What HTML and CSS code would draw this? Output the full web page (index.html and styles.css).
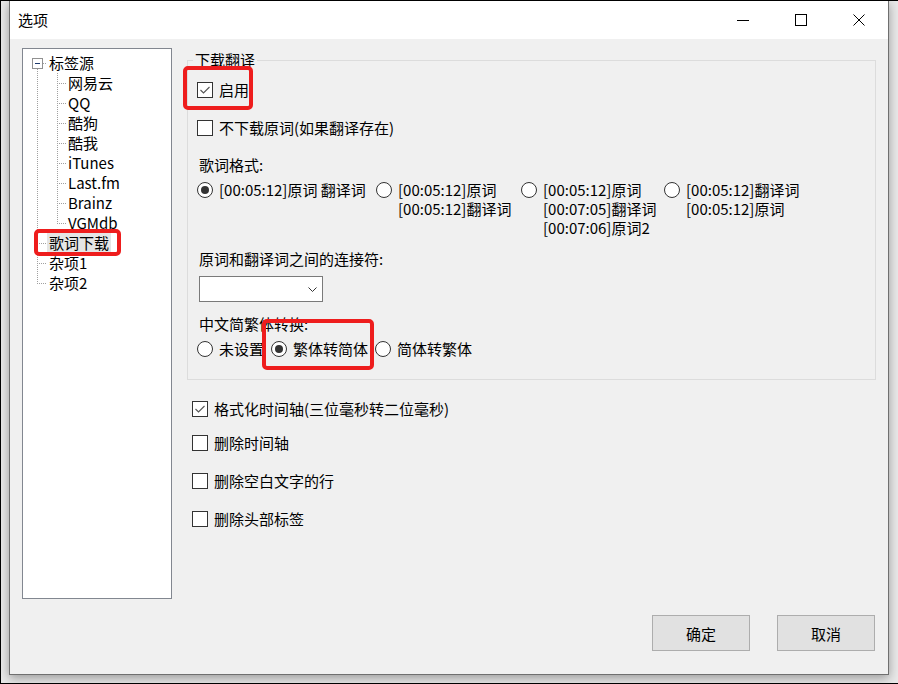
FILE: index.html
```html
<!DOCTYPE html>
<html lang="zh-CN">
<head>
<meta charset="utf-8">
<title>选项</title>
<link rel="stylesheet" href="styles.css">
</head>
<body>
<div class="screen">
  <div class="window">
    <div class="titlebar">
      <span class="title">选项</span>
      <div class="caption">
        <span class="cap-btn"><svg width="12" height="12" viewBox="0 0 12 12"><line x1="0" y1="6.5" x2="12" y2="6.5" stroke="#000" stroke-width="1"/></svg></span>
        <span class="cap-btn"><svg width="12" height="12" viewBox="0 0 12 12"><rect x="0.5" y="0.5" width="11" height="11" fill="none" stroke="#000" stroke-width="1"/></svg></span>
        <span class="cap-btn"><svg width="12" height="12" viewBox="0 0 12 12"><path d="M0.5 0.5 L11.5 11.5 M11.5 0.5 L0.5 11.5" stroke="#000" stroke-width="1" fill="none"/></svg></span>
      </div>
    </div>
    <div class="client">
      <div class="main">
        <div class="tree">
          <div class="node"><span class="gut g0 root"><span class="exp"></span></span><span class="label">标签源</span></div>
          <div class="node"><span class="gut g1 ch"></span><span class="label">网易云</span></div>
          <div class="node"><span class="gut g1 ch"></span><span class="label">QQ</span></div>
          <div class="node"><span class="gut g1 ch"></span><span class="label">酷狗</span></div>
          <div class="node"><span class="gut g1 ch"></span><span class="label">酷我</span></div>
          <div class="node"><span class="gut g1 ch"></span><span class="label">iTunes</span></div>
          <div class="node"><span class="gut g1 ch"></span><span class="label">Last.fm</span></div>
          <div class="node"><span class="gut g1 ch"></span><span class="label">Brainz</span></div>
          <div class="node"><span class="gut g1 ch-last"></span><span class="label">VGMdb</span></div>
          <div class="node"><span class="gut g0 tl"></span><span class="label sel">歌词下载</span></div>
          <div class="node"><span class="gut g0 tl"></span><span class="label">杂项1</span></div>
          <div class="node"><span class="gut g0 tl-last"></span><span class="label">杂项2</span></div>
        </div>
        <div class="panel">
          <fieldset class="group">
            <legend>下载翻译</legend>
            <div class="row">
              <span class="box"><svg width="12" height="12" viewBox="0 0 12 12"><polyline points="1.5,6 4.5,9 10.5,3" fill="none" stroke="#555" stroke-width="1.1"/></svg></span>
              <span>启用</span>
            </div>
            <div class="row m18">
              <span class="box"></span>
              <span>不下载原词(如果翻译存在)</span>
            </div>
            <div class="row lbl m17">歌词格式:</div>
            <div class="radios m5">
              <div class="ropt w1"><span class="rad on"></span><div class="rtxt">[00:05:12]原词 翻译词</div></div>
              <div class="ropt w2"><span class="rad"></span><div class="rtxt">[00:05:12]原词<br>[00:05:12]翻译词</div></div>
              <div class="ropt w3"><span class="rad"></span><div class="rtxt">[00:05:12]原词<br>[00:07:05]翻译词<br>[00:07:06]原词2</div></div>
              <div class="ropt"><span class="rad"></span><div class="rtxt">[00:05:12]翻译词<br>[00:05:12]原词</div></div>
            </div>
            <div class="row lbl m12">原词和翻译词之间的连接符:</div>
            <div class="combo m7"><svg width="9" height="5" viewBox="0 0 9 5"><polyline points="0.5,0.5 4.5,4.5 8.5,0.5" fill="none" stroke="#333" stroke-width="1"/></svg></div>
            <div class="row lbl m12">中文简繁体转换:</div>
            <div class="radios m5">
              <div class="ropt w4"><span class="rad"></span><div class="rtxt">未设置</div></div>
              <div class="ropt w5"><span class="rad on"></span><div class="rtxt">繁体转简体</div></div>
              <div class="ropt"><span class="rad"></span><div class="rtxt">简体转繁体</div></div>
            </div>
          </fieldset>
          <div class="opts">
            <div class="row m19">
              <span class="box"><svg width="12" height="12" viewBox="0 0 12 12"><polyline points="1.5,6 4.5,9 10.5,3" fill="none" stroke="#555" stroke-width="1.1"/></svg></span>
              <span>格式化时间轴(三位毫秒转二位毫秒)</span>
            </div>
            <div class="row m14"><span class="box"></span><span>删除时间轴</span></div>
            <div class="row m18"><span class="box"></span><span>删除空白文字的行</span></div>
            <div class="row m18"><span class="box"></span><span>删除头部标签</span></div>
          </div>
        </div>
      </div>
      <div class="buttons">
        <button class="btn">确定</button>
        <button class="btn">取消</button>
      </div>
    </div>
  </div>
  <div class="mark mark-enable"></div>
  <div class="mark mark-tree"></div>
  <div class="mark mark-conv"></div>
</div>
</body>
</html>
```

FILE: styles.css
```css
* { box-sizing: border-box; }
html, body { margin: 0; padding: 0; }
body {
  font-family: "Noto Sans CJK SC", "Microsoft YaHei", sans-serif;
  font-size: 15px;
  color: #000;
  background: #e9e9e9;
}
.screen {
  position: relative;
  width: 898px;
  height: 684px;
  border-top: 1px solid #000;
  border-left: 1px solid #000;
  border-bottom: 1px solid #000;
  background: #e9e9e9;
  padding-left: 8px;
  overflow: hidden;
}
.window {
  width: 880px;
  height: 674px;
  background: #f0f0f0;
  border: 1px solid #6f6f6f;
  border-top: none;
  box-shadow: 0 3px 10px rgba(0,0,0,0.35);
  display: flex;
  flex-direction: column;
}
.titlebar {
  height: 38px;
  flex: none;
  background: #fff;
  display: flex;
  align-items: center;
}
.title {
  flex: 1;
  padding-left: 8px;
  font-size: 15px;
  line-height: 20px;
}
.caption { display: flex; height: 100%; }
.cap-btn {
  width: 58px;
  display: flex;
  align-items: center;
  justify-content: center;
}
.cap-btn svg { display: block; }

.client {
  flex: 1;
  padding: 9px 12px 0;
  display: flex;
  flex-direction: column;
}
.main {
  display: flex;
  gap: 15px;
  height: 551px;
  flex: none;
}

/* tree */
.tree {
  width: 150px;
  flex: none;
  background: #fff;
  border: 1px solid #828790;
  padding-top: 4px;
}
.node {
  display: flex;
  height: 20px;
  line-height: 20px;
  white-space: nowrap;
}
.gut {
  flex: none;
  height: 20px;
  display: flex;
  align-items: center;
}
.g0 { width: 24px; }
.g1 { width: 43px; }
.label { padding: 0 2px; }
.label.sel { background: #e5e5e5; }
.exp {
  width: 11px;
  height: 11px;
  margin-left: 9px;
  border: 1px solid #919191;
  background: #fff;
  display: flex;
  align-items: center;
  justify-content: center;
}
.exp::after {
  content: "";
  width: 5px;
  height: 1px;
  background: #1e3a6e;
}
.root {
  background:
    repeating-linear-gradient(to bottom, #a0a0a0 0 1px, transparent 1px 2px) 14px 16px / 1px 4px no-repeat,
    repeating-linear-gradient(to right, #a0a0a0 0 1px, transparent 1px 2px) 20px 10px / 4px 1px no-repeat;
}
.tl {
  background:
    repeating-linear-gradient(to bottom, #a0a0a0 0 1px, transparent 1px 2px) 14px 0 / 1px 20px no-repeat,
    repeating-linear-gradient(to right, #a0a0a0 0 1px, transparent 1px 2px) 14px 10px / 10px 1px no-repeat;
}
.tl-last {
  background:
    repeating-linear-gradient(to bottom, #a0a0a0 0 1px, transparent 1px 2px) 14px 0 / 1px 10px no-repeat,
    repeating-linear-gradient(to right, #a0a0a0 0 1px, transparent 1px 2px) 14px 10px / 10px 1px no-repeat;
}
.ch {
  background:
    repeating-linear-gradient(to bottom, #a0a0a0 0 1px, transparent 1px 2px) 14px 0 / 1px 20px no-repeat,
    repeating-linear-gradient(to bottom, #a0a0a0 0 1px, transparent 1px 2px) 34px 0 / 1px 20px no-repeat,
    repeating-linear-gradient(to right, #a0a0a0 0 1px, transparent 1px 2px) 34px 10px / 9px 1px no-repeat;
}
.ch-last {
  background:
    repeating-linear-gradient(to bottom, #a0a0a0 0 1px, transparent 1px 2px) 14px 0 / 1px 20px no-repeat,
    repeating-linear-gradient(to bottom, #a0a0a0 0 1px, transparent 1px 2px) 34px 0 / 1px 10px no-repeat,
    repeating-linear-gradient(to right, #a0a0a0 0 1px, transparent 1px 2px) 34px 10px / 9px 1px no-repeat;
}

/* right panel */
.panel {
  flex: 1;
  min-width: 0;
  padding-top: 2px;
  display: flex;
  flex-direction: column;
}
.group {
  margin: 0;
  min-width: 0;
  padding: 10px 0 21px 9px;
  border: 1px solid #dcdcdc;
}
.group legend {
  margin-left: -4px;
  padding: 0 2px;
  line-height: 20px;
}
.row {
  height: 20px;
  line-height: 20px;
  display: flex;
  align-items: center;
  white-space: nowrap;
}
.row.lbl { padding-left: 2px; }
.box {
  width: 16px;
  height: 16px;
  flex: none;
  margin-right: 6px;
  border: 1px solid #333;
  background: #fff;
  display: flex;
  align-items: center;
  justify-content: center;
}
.box svg { display: block; }
.radios { display: flex; }
.ropt {
  display: flex;
  align-items: flex-start;
  flex: none;
}
.w1 { width: 179px; }
.w2 { width: 145px; }
.w3 { width: 143px; }
.w4 { width: 74px; }
.w5 { width: 104px; }
.rad {
  width: 16px;
  height: 16px;
  flex: none;
  margin-top: 2px;
  margin-right: 6px;
  border: 1px solid #333;
  border-radius: 50%;
  background: #fff;
  display: flex;
  align-items: center;
  justify-content: center;
}
.rad.on::after {
  content: "";
  width: 8px;
  height: 8px;
  border-radius: 50%;
  background: #333;
}
.rtxt {
  line-height: 19px;
  white-space: nowrap;
}
.combo {
  margin-left: 2px;
  width: 124px;
  height: 26px;
  border: 1px solid #7a7a7a;
  background: #fff;
  display: flex;
  align-items: center;
  justify-content: flex-end;
  padding-right: 5px;
}
.combo svg { display: block; }
.opts { padding-left: 5px; }

.m5 { margin-top: 5px; }
.m7 { margin-top: 7px; }
.m12 { margin-top: 12px; }
.m14 { margin-top: 14px; }
.m17 { margin-top: 17px; }
.m18 { margin-top: 18px; }
.m19 { margin-top: 19px; }

/* dialog buttons */
.buttons {
  display: flex;
  justify-content: flex-end;
  gap: 27px;
  margin-top: 16px;
  padding-right: 1px;
}
.btn {
  width: 98px;
  height: 36px;
  margin: 0;
  padding: 0;
  background: #e1e1e1;
  border: 1px solid #adadad;
  font-family: inherit;
  font-size: 15px;
  color: #000;
  display: flex;
  align-items: center;
  justify-content: center;
}

/* red annotation marks */
.mark {
  position: absolute;
  border: 4px solid #ee1d1d;
  border-radius: 5px;
}
.mark-enable { left: 182px; top: 65px; width: 70px; height: 44px; }
.mark-tree { left: 33px; top: 228px; width: 87px; height: 27px; }
.mark-conv { left: 261px; top: 318px; width: 112px; height: 51px; }
```
